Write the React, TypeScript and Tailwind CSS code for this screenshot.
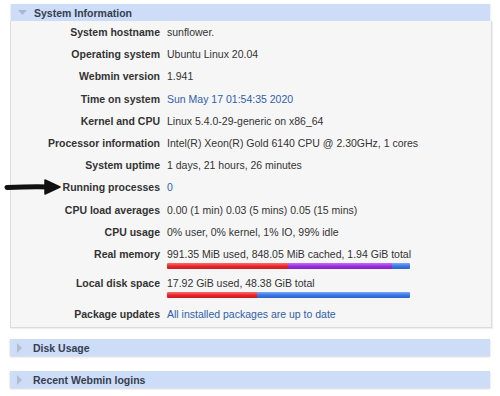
import React from "react";

type Row = {
  label: string;
  value: string;
  link?: boolean;
};

const rows: Row[] = [
  { label: "System hostname", value: "sunflower." },
  { label: "Operating system", value: "Ubuntu Linux 20.04" },
  { label: "Webmin version", value: "1.941" },
  { label: "Time on system", value: "Sun May 17 01:54:35 2020", link: true },
  { label: "Kernel and CPU", value: "Linux 5.4.0-29-generic on x86_64" },
  { label: "Processor information", value: "Intel(R) Xeon(R) Gold 6140 CPU @ 2.30GHz, 1 cores" },
  { label: "System uptime", value: "1 days, 21 hours, 26 minutes" },
  { label: "Running processes", value: "0", link: true },
  { label: "CPU load averages", value: "0.00 (1 min) 0.03 (5 mins) 0.05 (15 mins)" },
  { label: "CPU usage", value: "0% user, 0% kernel, 1% IO, 99% idle" },
];

// segment widths in px, bar is 243 wide
function UsageBar({ parts }: { parts: { w: number; cls: string }[] }) {
  return (
    <div className="mt-[2px] flex h-[6px] w-[243px] overflow-hidden rounded-[1px]">
      {parts.map((p, i) => (
        <div key={i} className={p.cls} style={{ width: p.w }} />
      ))}
    </div>
  );
}

function SectionHeader({ title, open }: { title: string; open?: boolean }) {
  return (
    <div className="flex h-[17px] items-center bg-[#cddcf7] pl-[7px] shadow-[0_1px_2px_rgba(0,0,0,0.18)]">
      <div className="flex w-[16px] items-center justify-start">
        {open ? (
          <svg width="9" height="6" viewBox="0 0 9 6">
            <path d="M0 0 L9 0 L4.5 5 Z" fill="#a9b8cf" />
          </svg>
        ) : (
          <svg width="6" height="10" viewBox="0 0 6 10">
            <path d="M0 0 L5 5 L0 10 Z" fill="#b3bccb" />
          </svg>
        )}
      </div>
      <span className="font-bold text-[#34404f]">{title}</span>
    </div>
  );
}

export default function App() {
  const label = "w-[156px] shrink-0 pr-[7px] text-right font-bold text-[#333]";
  return (
    <div
      className="relative h-[396px] w-[500px] overflow-hidden bg-white text-[10.5px] leading-[14px] text-[#333]"
      style={{ fontFamily: '"Liberation Sans", Arial, sans-serif' }}
    >
      <div className="mx-[10px] mt-[4px] w-[482px]">
        <div className="ml-[1px] mr-[2px]">
          <SectionHeader title="System Information" open />
        </div>
        <div className="border border-t-0 border-[#dcdcdc] bg-[#f6f6f6] pb-[2px] shadow-[1px_1px_1px_rgba(0,0,0,0.06)]">
          {rows.map((r) => (
            <div key={r.label} className="flex h-[22.2px] items-center">
              <div className={label}>{r.label}</div>
              <div className={r.link ? "text-[#2f5ea8]" : "text-[#333]"}>{r.value}</div>
            </div>
          ))}
          <div className="flex pt-[4px] pb-[3px]">
            <div className={label}>Real memory</div>
            <div className="flex flex-col">
              <div>991.35 MiB used, 848.05 MiB cached, 1.94 GiB total</div>
              <UsageBar
                parts={[
                  { w: 121, cls: "bg-linear-to-b from-[#ff6a6a] via-[#e8262c] to-[#c81c22]" },
                  { w: 104, cls: "bg-linear-to-b from-[#c46cf5] via-[#9b2fe0] to-[#7f22c0]" },
                  { w: 18, cls: "bg-linear-to-b from-[#7aa8f5] via-[#3b78e6] to-[#2c62c8]" },
                ]}
              />
            </div>
          </div>
          <div className="flex pt-[4px] pb-[5px]">
            <div className={label}>Local disk space</div>
            <div className="flex flex-col">
              <div>17.92 GiB used, 48.38 GiB total</div>
              <UsageBar
                parts={[
                  { w: 90, cls: "bg-linear-to-b from-[#ff6a6a] via-[#e8262c] to-[#c81c22]" },
                  { w: 153, cls: "bg-linear-to-b from-[#7aa8f5] via-[#3b78e6] to-[#2c62c8]" },
                ]}
              />
            </div>
          </div>
          <div className="flex h-[22.2px] items-center">
            <div className={label}>Package updates</div>
            <div className="text-[#2f5ea8]">All installed packages are up to date</div>
          </div>
        </div>

        <div className="mt-[11px] mr-[2px]">
          <SectionHeader title="Disk Usage" />
        </div>
        <div className="mt-[15px] mr-[2px]">
          <SectionHeader title="Recent Webmin logins" />
        </div>
      </div>

      {/* annotation arrow */}
      <svg className="absolute left-0 top-[177px]" width="64" height="20" viewBox="0 0 64 20">
        <path d="M7 10.5 C 20 10, 35 9.5, 49 10" stroke="#111" strokeWidth="5" strokeLinecap="round" fill="none" />
        <path d="M45 3 L60 10 L45 17 Z" fill="#111" stroke="#111" strokeWidth="1.5" strokeLinejoin="round" />
      </svg>
    </div>
  );
}
